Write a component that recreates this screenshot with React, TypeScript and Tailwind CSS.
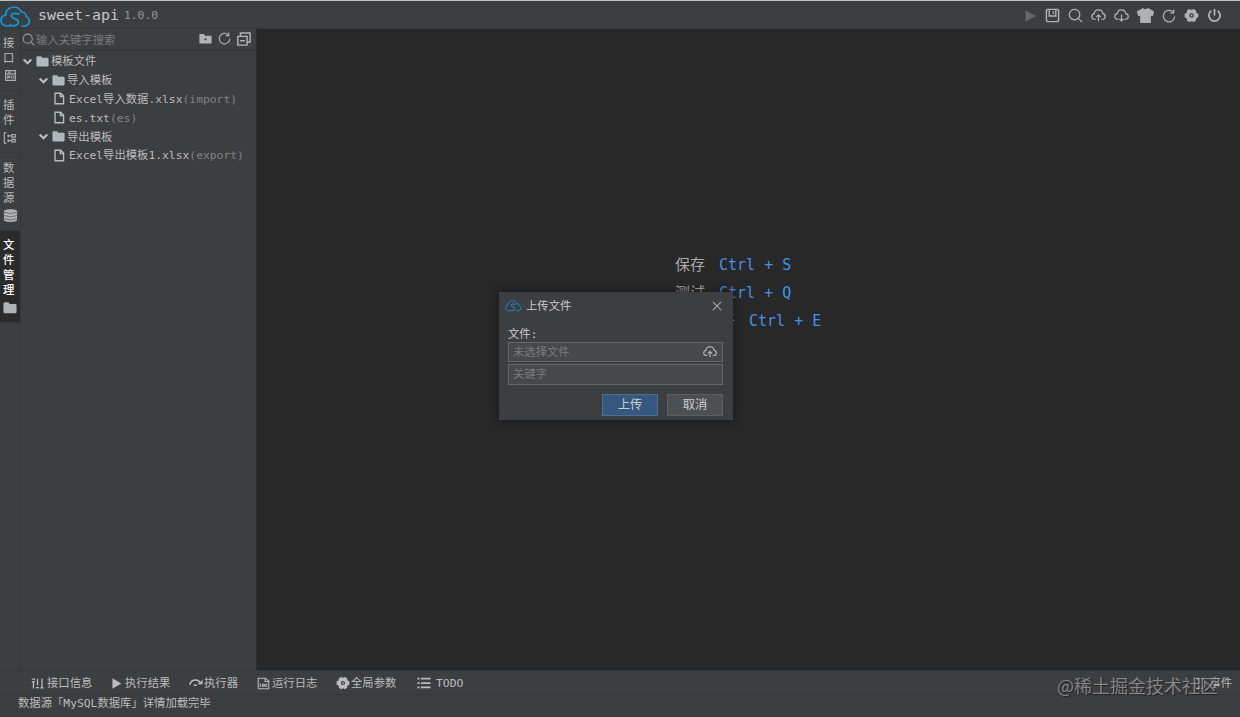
import type { ReactNode } from 'react'
import { clsx } from 'clsx'

type IconProps = { className?: string }
type TreeRow = { depth: number; name: string; path?: string }

const tree: TreeRow[] = [
  { depth: 0, name: '模板文件' },
  { depth: 1, name: '导入模板' },
  { depth: 2, name: 'Excel导入数据.xlsx', path: '(import)' },
  { depth: 2, name: 'es.txt', path: '(es)' },
  { depth: 1, name: '导出模板' },
  { depth: 2, name: 'Excel导出模板1.xlsx', path: '(export)' },
]

function Svg({ className, children }: { className?: string; children: ReactNode }) {
  return (
    <svg viewBox="0 0 16 16" className={clsx('shrink-0', className)} fill="none" stroke="currentColor" strokeWidth="1.3">
      {children}
    </svg>
  )
}

function Logo({ className }: IconProps) {
  return (
    <svg viewBox="0 0 30 22" className={clsx('shrink-0 text-[#1296db]', className)} fill="none" stroke="currentColor" strokeWidth="1.7" strokeLinecap="round">
      <path d="M10 20H7C3.5 20 1 17.6 1 14.5C1 11.6 3 9.6 5.6 9.2C5.5 4.6 9 1 13.5 1C17 1 20 3 21.3 6C24.5 5.800 26.3 8 26.2 10.5C28.3 11.5 29.3 13 29.3 15C29.3 18 27 20 24 20H22" />
      <path d="M19 8.3C16 6.7 11.3 6.9 11.3 9.8C11.3 13.4 18.400 11.9 18.4 16C18.4 20 13 20.6 9.8 18.8" />
    </svg>
  )
}

const Folder = ({ className }: IconProps) => (
  <Svg className={className}><path d="M.5 3Q.5 1.500 2 1.500H6L8 3.500H14Q15.500 3.500 15.500 5V12.500Q15.500 14 14 14H2Q.5 14 .5 12.500Z" fill="currentColor" stroke="none" /></Svg>
)
const File = ({ className }: IconProps) => (
  <Svg className={className}><path d="M2.500 1.500H9.500L13 5V14.500H2.500ZM9 1.500V5.500H13" strokeWidth="1.700" /></Svg>
)
const Chevron = ({ className }: IconProps) => (
  <Svg className={className}><path d="M2.500 5L8 10.500L13.500 5" strokeWidth="3.200" /></Svg>
)
const Search = ({ className }: IconProps) => (
  <Svg className={className}><circle cx="7" cy="7" r="5.600" /><path d="M11 11L15 15" /></Svg>
)
const Refresh = ({ className }: IconProps) => (
  <Svg className={className}><path d="M14.500 8.500A6.500 6.500 0 1 1 12.300 3.200M13.300 .5V4.500H9.500" strokeWidth="1.400" /></Svg>
)
const Cloud = ({ className, down }: IconProps & { down?: boolean }) => (
  <Svg className={className}>
    <path d="M5 12H4C2.200 12 .8 10.700 .8 9C.8 7.400 2 6.200 3.500 6C3.700 3.600 5.600 2 8 2C10.400 2 12.300 3.600 12.500 6C14 6.200 15.200 7.400 15.200 9C15.200 10.700 13.800 12 12 12H11" />
    <path d={down ? 'M8 7V14M5.800 11.500L8 14L10.200 11.500' : 'M8 14V7.300M5.500 9.800L8 7.300L10.500 9.800'} />
  </Svg>
)
const Gear = ({ className }: IconProps) => (
  <Svg className={className}>
    <path fill="currentColor" stroke="none" fillRule="evenodd" d="M5.800 1L8 2L10.200 1L12.700 2.500L13 4.800L15.400 6.300V9.700L13 11.200L12.700 13.500L10.200 15L8 14L5.800 15L3.300 13.500L3 11.200L.6 9.700V6.300L3 4.800L3.300 2.500ZM8 5.600A2.400 2.400 0 1 0 8 10.400A2.400 2.400 0 1 0 8 5.600Z" />
    <circle cx="8" cy="8" r="1" fill="currentColor" stroke="none" />
  </Svg>
)
const Play = ({ className }: IconProps) => (
  <Svg className={className}><path d="M3 1.500L14 8L3 14.500Z" fill="currentColor" stroke="none" /></Svg>
)
const Save = ({ className }: IconProps) => (
  <Svg className={className}><path d="M2.500 1.500H13.500L14.500 2.500V13.500L13.500 14.500H2.500L1.500 13.500V2.500ZM4.500 1.500V8.500H11.500V1.500M9 3.500V6" strokeWidth="1.500" /></Svg>
)
const Shirt = ({ className }: IconProps) => (
  <Svg className={className}><path d="M5.500 1.500Q8 3.500 10.500 1.500L15.500 4.500L14.500 8L12.500 7.500V14.500H3.500V7.500L1.500 8L.5 4.500Z" fill="currentColor" strokeLinejoin="round" strokeWidth="1" /></Svg>
)
const Power = ({ className }: IconProps) => (
  <Svg className={className}><path d="M8 1V8M4.600 3A6 6 0 1 0 11.400 3" strokeWidth="1.900" /></Svg>
)
const Collapse = ({ className }: IconProps) => (
  <Svg className={className}><path d="M1 5H11.500V15H1ZM4 5V1.200H15V11.500H11.500M3.500 10H9" strokeWidth="1.700" /></Svg>
)
const NewFolder = ({ className }: IconProps) => (
  <Svg className={className}><path d="M.5 2.500H6L7.500 4.500H15.500V14H.5Z" fill="currentColor" stroke="none" /><path d="M8 7.500V10.500M6.500 9H9.500" stroke="#3c3f41" strokeWidth="1" /></Svg>
)
const ApiIcon = ({ className }: IconProps) => (
  <Svg className={className}><path d="M2 2H14V14H2ZM2 6H14M4.500 8V12M4.500 8.500H7V10.500H4.500M9.500 8V12M12 8V12M5 4H8" /></Svg>
)
const PluginIcon = ({ className }: IconProps) => (
  <Svg className={className}><path d="M4 2H1.500V14H4M5 5.500H9M5 11H9M10 4H14V7H10ZM10 9.500H14V12.500H10ZM6 4V7M6 9.500V12.500" /></Svg>
)
const Database = ({ className }: IconProps) => (
  <Svg className={className}>
    <path d="M1 3.500C1 .5 15 .5 15 3.500V12.500C15 15.700 1 15.700 1 12.500Z" fill="currentColor" stroke="none" />
    <path d="M1 4.500Q8 7.500 15 4.500M1 8Q8 11 15 8M1 11.300Q8 14.300 15 11.300" stroke="#5b5e60" strokeWidth=".8" />
  </Svg>
)
const Sliders = ({ className }: IconProps) => (
  <Svg className={className}><path d="M3 5V14M1 2.500H5M8 2V10M6 13H10M13.500 2V14M11.500 13.500H15.500M1 6H5" strokeWidth="1.600" /></Svg>
)
const StepOver = ({ className }: IconProps) => (
  <Svg className={className}><path d="M1 10C2.500 3.500 10.500 2.500 13.500 9" strokeWidth="1.800" /><path d="M9.500 9.500H15.500V4.500Z" fill="currentColor" stroke="none" /><path d="M5.500 10.500H9" strokeWidth="1.800" /></Svg>
)
const LogIcon = ({ className }: IconProps) => (
  <Svg className={className}><path d="M1.500 1.500H10.500L14.500 5V14.500H1.500ZM10 1.500V5.500H14.500M4 8V11.500H5.500M7 9H9V11.500H7ZM12.800 9H11V11.500H12.800" /></Svg>
)
const List = ({ className }: IconProps) => (
  <Svg className={className}><path d="M.5 3H3M4.500 3H15.500M.5 8H3M4.500 8H15.500M.5 13H3M4.500 13H15.500" strokeWidth="2" /></Svg>
)
const Close = ({ className }: IconProps) => (
  <Svg className={className}><path d="M2.500 2.500L13.500 13.500M13.500 2.500L2.500 13.500" strokeWidth="1.500" /></Svg>
)
const EventIcon = ({ className }: IconProps) => (
  <Svg className={className}><path d="M1.500 2H6M1.500 2V14H6M6 1V15M9 2C15 2 15 14 9 14" /></Svg>
)

const sideTabs = [
  { label: '接口', icon: <ApiIcon className="size-[13px]" /> },
  { label: '插件', icon: <PluginIcon className="size-[14px]" /> },
  { label: '数据源', icon: <Database className="size-[15px]" /> },
  { label: '文件管理', icon: <Folder className="size-[14px]" />, active: true },
]

const bottomTabs = [
  { label: '接口信息', width: 'w-[79px]', icon: <Sliders className="mr-[3px] size-[13px]" /> },
  { label: '执行结果', width: 'w-[79px]', icon: <Play className="mr-[2px] size-[13px]" /> },
  { label: '执行器', width: 'w-[68px]', icon: <StepOver className="mr-px size-[14px]" /> },
  { label: '运行日志', width: 'w-[79px]', icon: <LogIcon className="mr-[2px] size-[13px]" /> },
  { label: '全局参数', width: 'w-[81px]', icon: <Gear className="mr-px size-[14px]" /> },
  { label: 'TODO', width: 'w-[60px]', icon: <List className="mr-[5px] size-[14px]" /> },
]

const shortcuts = [
  { name: '保存', keys: 'Ctrl + S' },
  { name: '测试', keys: 'Ctrl + Q' },
  { name: '最近打开', keys: 'Ctrl + E' },
]

function UploadDialog() {
  return (
    <div className="absolute left-[499px] top-[292px] flex h-[128px] w-[234px] flex-col bg-[#3c3f41] text-[#cccccc] shadow-[0_0_7px_#151515]">
      <div className="flex h-[28px] items-center pl-[6px] pr-[10px]">
        <Logo className="h-[12px] w-[16px]" />
        <span className="ml-[5px] flex-1">上传文件</span>
        <Close className="size-[12px] text-[#a5a8aa]" />
      </div>
      <div className="flex flex-col pl-[9px] pr-[10px] pt-[6px]">
        <div className="h-[16px] leading-[16px]">文件:</div>
        <div className="flex h-[20px] items-center justify-between border border-[#646769] bg-[#45494a] pl-[4px] pr-[5px] text-[#787b7d]">
          未选择文件
          <Cloud className="size-[14px] text-[#b4b7b9]" />
        </div>
        <div className="mt-[2px] flex h-[21px] items-center border border-[#646769] bg-[#45494a] pl-[4px] text-[#787b7d]">关键字</div>
      </div>
      <div className="mt-[9px] flex justify-end gap-[9px] pr-[10px] text-[12.300px]">
        <button className="h-[22px] w-[56px] border border-[#4c708c] bg-[#365880] leading-[21px]">上传</button>
        <button className="h-[22px] w-[56px] border border-[#5e6060] bg-[#4c5052] leading-[21px]">取消</button>
      </div>
    </div>
  )
}

export default function App() {
  return (
    <div className="relative flex h-[717px] w-[1240px] flex-col overflow-hidden bg-[#3c3f41] font-['DejaVu_Sans_Mono','Noto_Sans_CJK_SC',monospace] text-[11.330px] leading-[15px] text-[#bbbbbb]">
      <header className="flex h-[29px] shrink-0 items-center border-b border-[#343638] border-t border-t-[#b9c3c0] pt-[2px]">
        <Logo className="mt-[2px] h-[22px] w-[30px]" />
        <span className="ml-[8px] text-[14.950px] text-[#c4c6c7]">sweet-api</span>
        <span className="ml-[5px] text-[#949799]">1.0.0</span>
        <div className="ml-auto mr-[18px] flex items-center gap-[8px] text-[#afb1b3]">
          <Play className="size-[14px] text-[#67696b]" />
          <Save className="size-[15px]" />
          <Search className="size-[15px]" />
          <Cloud className="size-[15px]" />
          <Cloud className="size-[15px]" down />
          <Shirt className="size-[17px]" />
          <Refresh className="size-[14px]" />
          <Gear className="size-[15px]" />
          <Power className="size-[15px]" />
        </div>
      </header>

      <div className="flex h-[641px] shrink-0">
        <nav className="flex w-[21px] flex-col border-r border-[#343638]">
          {sideTabs.map((tab) => (
            <div key={tab.label} className={clsx('flex flex-col items-center border-b border-[#36393a] pb-[6px] pt-[7px]', tab.active ? 'bg-[#2b2b2b] font-medium text-white' : 'mb-[.4px]')}>
              <div className="flex w-full flex-col pl-[3px]">
                {[...tab.label].map((char) => <span key={char} className="h-[15px]">{char}</span>)}
              </div>
              <div className="mt-px flex h-[17px] items-center text-[#afb1b3]">{tab.icon}</div>
            </div>
          ))}
        </nav>

        <aside className="flex w-[236px] flex-col border-r border-[#2d2f30]">
          <div className="flex h-[22px] items-center border-b border-[#323435] pl-px pr-[5px]">
            <Search className="size-[13px] text-[#9da0a2]" />
            <span className="ml-px flex-1 pt-[2px] text-[#77797b]">输入关键字搜索</span>
            <div className="mb-[2px] flex items-center gap-[6px] text-[#afb1b3]">
              <NewFolder className="size-[13px]" />
              <Refresh className="size-[13px]" />
              <Collapse className="size-[14px]" />
            </div>
          </div>
          <div className="flex flex-col pt-px">
            {tree.map((row) => (
              <div key={row.name} className={clsx('flex h-[18.800px] items-center whitespace-nowrap', row.depth === 0 && 'pl-px', row.depth === 1 && 'pl-[17px]', row.depth === 2 && 'pl-[32px]')}>
                {row.depth < 2 ? (
                  <>
                    <Chevron className="mr-[3px] size-[11px]" />
                    <Folder className="mr-[2px] size-[13px] text-[#afb8bd]" />
                  </>
                ) : (
                  <File className="mr-[3px] size-[13px] text-[#b4bcc1]" />
                )}
                <span className="pt-px">{row.name}</span>
                {row.path && <span className="pt-px text-[#808284]">{row.path}</span>}
              </div>
            ))}
          </div>
        </aside>

        <main className="flex-1 bg-[#282828] pl-[418px] pt-[222px] text-[15px]">
          {shortcuts.map((s) => (
            <div key={s.name} className="flex h-[28.300px] items-center gap-[14px] whitespace-pre text-[#a9a9a9]">
              {s.name}
              <span className="text-[#4591e8]">{s.keys}</span>
            </div>
          ))}
        </main>
      </div>

      <div className="flex h-[25px] shrink-0 items-center border-y border-[#343638] pl-[31px] pt-px">
        <div className="flex items-center">
          {bottomTabs.map((tab) => (
            <div key={tab.label} className={clsx('flex shrink-0 items-center whitespace-nowrap', tab.width)}>
              {tab.icon}
              {tab.label}
            </div>
          ))}
        </div>
        <div className="ml-auto mr-[8px] flex items-center gap-[2px]">
          <EventIcon className="size-[13px]" />
          事件
        </div>
      </div>
      <footer className="flex flex-1 items-start pl-[18px] pt-px">数据源「MySQL数据库」详情加载完毕</footer>

      <UploadDialog />
      <div className="absolute left-[1057px] top-[674px] whitespace-nowrap font-['Noto_Sans_CJK_SC',sans-serif] text-[18px] leading-[22px] text-[#a0a2a3]/75 [text-shadow:1px_1px_1px_#222]">@稀土掘金技术社区</div>
    </div>
  )
}
